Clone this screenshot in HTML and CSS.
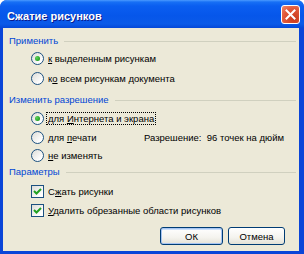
FILE: index.html
```html
<!DOCTYPE html>
<html lang="ru">
<head>
<meta charset="utf-8">
<link rel="stylesheet" href="styles.css">
</head>
<body>
<div class="window">
  <div class="titlebar">
    <span class="title">Сжатие рисунков</span>
    <span class="close">
      <svg width="19" height="19" viewBox="0 0 19 19">
        <path d="M5.5 5.5 L13.5 13.5 M13.5 5.5 L5.5 13.5" stroke="#fff" stroke-width="2" stroke-linecap="square"/>
      </svg>
    </span>
  </div>
  <div class="client">
    <div class="legend legend-1"><span>Применить</span><i class="rule"></i></div>
    <div class="row"><span class="radio on"></span><span class="lbl"><u>к</u> выделенным рисункам</span></div>
    <div class="row"><span class="radio"></span><span class="lbl">к<u>о</u> всем рисункам документа</span></div>

    <div class="legend legend-2"><span>Изменить разрешение</span><i class="rule"></i></div>
    <div class="row"><span class="radio on"></span><span class="lbl focus">для <u>И</u>нтернета и экрана</span></div>
    <div class="row"><span class="radio"></span><span class="lbl fixed">для <u>п</u>ечати</span><span class="res">Разрешение:&nbsp; 96 точек на дюйм</span></div>
    <div class="row"><span class="radio"></span><span class="lbl"><u>н</u>е изменять</span></div>

    <div class="legend legend-3"><span>Параметры</span><i class="rule"></i></div>
    <div class="row"><span class="check on"><svg width="11" height="11" viewBox="0 0 11 11"><path d="M2 5 L4.5 7.5 L9 3" stroke="#21a121" stroke-width="2" fill="none"/></svg></span><span class="lbl">С<u>ж</u>ать рисунки</span></div>
    <div class="row"><span class="check on"><svg width="11" height="11" viewBox="0 0 11 11"><path d="M2 5 L4.5 7.5 L9 3" stroke="#21a121" stroke-width="2" fill="none"/></svg></span><span class="lbl"><u>У</u>далить обрезанные области рисунков</span></div>

    <div class="buttons">
      <span class="btn default">ОК</span>
      <span class="btn">Отмена</span>
    </div>
  </div>
</div>
</body>
</html>
```

FILE: styles.css
```css
html, body {
  margin: 0;
  padding: 0;
  background: #ffffff;
}
body {
  width: 304px;
  height: 254px;
  overflow: hidden;
  font-family: "Liberation Sans", Arial, sans-serif;
  font-size: 9.5px;
  color: #000;
}
.window {
  width: 304px;
  height: 254px;
  box-sizing: border-box;
  background: #0a45d8;
  display: flex;
  flex-direction: column;
  padding: 0 5px 3px 3px;
  border-radius: 7px 7px 0 0;
}
.titlebar {
  height: 28px;
  margin: 0 -5px 0 -3px;
  border-radius: 7px 7px 0 0;
  background: linear-gradient(#4a9aff 0px, #1770f5 2px, #0a5ef0 6px, #0656ea 16px, #0a5ae8 24px, #0448d8 28px);
  display: flex;
  align-items: center;
  padding: 0 4px 0 7px;
  flex: none;
}
.title {
  flex: 1;
  color: #fff;
  font-family: "Liberation Sans", Arial, sans-serif;
  font-weight: bold;
  font-size: 11px;
  text-shadow: 1px 1px 0 #0a1a8a;
  padding-top: 3px;
}
.close {
  width: 19px;
  height: 19px;
  box-sizing: border-box;
  border: 1px solid #fff;
  border-radius: 3px;
  background: radial-gradient(circle at 70% 75%, #c83a1c 0%, #e2593a 60%, #f08a6e 100%);
  display: flex;
  margin-top: 1px;
}
.close svg {
  margin: -1px;
}
.client {
  flex: 1;
  min-width: 0;
  background: #ece9d8;
  padding: 6px 3px 0 6px;
  display: flex;
  flex-direction: column;
}
.legend {
  height: 14px;
  line-height: 14px;
  display: flex;
  align-items: center;
  color: #0046d5;
}
.legend .rule {
  flex: 1;
  height: 1px;
  background: #d0d0bf;
  margin-left: 6px;
  margin-top: 1px;
}
.legend-2 { margin-top: 6px; }
.legend-3 { margin-top: 1px; }
.row {
  height: 18px;
  display: flex;
  align-items: center;
  padding-left: 22px;
  margin-top: 1px;
  white-space: nowrap;
}
.legend-1 + .row { margin-top: 1px; }
.legend-1 + .row + .row { margin-top: 2px; }
.legend-2 + .row { margin-top: 2px; }
.legend-2 + .row + .row + .row { margin-top: 0px; }
.legend-3 + .row { margin-top: 3px; }
.radio {
  width: 13px;
  height: 13px;
  box-sizing: border-box;
  border: 1px solid #1c5180;
  border-radius: 50%;
  background: linear-gradient(135deg, #dcdcd7, #fff 80%);
  position: relative;
  flex: none;
}
.radio.on::after {
  content: "";
  position: absolute;
  left: 3px;
  top: 3px;
  width: 5px;
  height: 5px;
  border-radius: 50%;
  background: radial-gradient(circle at 35% 35%, #5ed25e, #21a121 70%);
}
.check {
  width: 13px;
  height: 13px;
  box-sizing: border-box;
  border: 1px solid #1c5180;
  background: linear-gradient(135deg, #dcdcd7, #fff 80%);
  flex: none;
  display: flex;
}
.lbl {
  margin-left: 2px;
  padding: 0 1px;
  line-height: 11px;
  border: 1px solid transparent;
}
.lbl.focus {
  border: 1px dotted #000;
}
.lbl.fixed {
  width: 94px;
}
.buttons {
  margin-top: 8px;
  display: flex;
  justify-content: flex-end;
  gap: 5px;
  padding-right: 11px;
}
.btn {
  height: 18px;
  box-sizing: border-box;
  border: 1px solid #003c74;
  border-radius: 3px;
  background: linear-gradient(#ffffff, #f4f3ee 60%, #e3e1d6);
  display: flex;
  align-items: center;
  justify-content: center;
  width: 57px;
}
.btn.default {
  width: 63px;
  box-shadow: inset 0 0 0 1px #a6c4f2, inset 0 1px 0 1px #cde1fb;
}
```
